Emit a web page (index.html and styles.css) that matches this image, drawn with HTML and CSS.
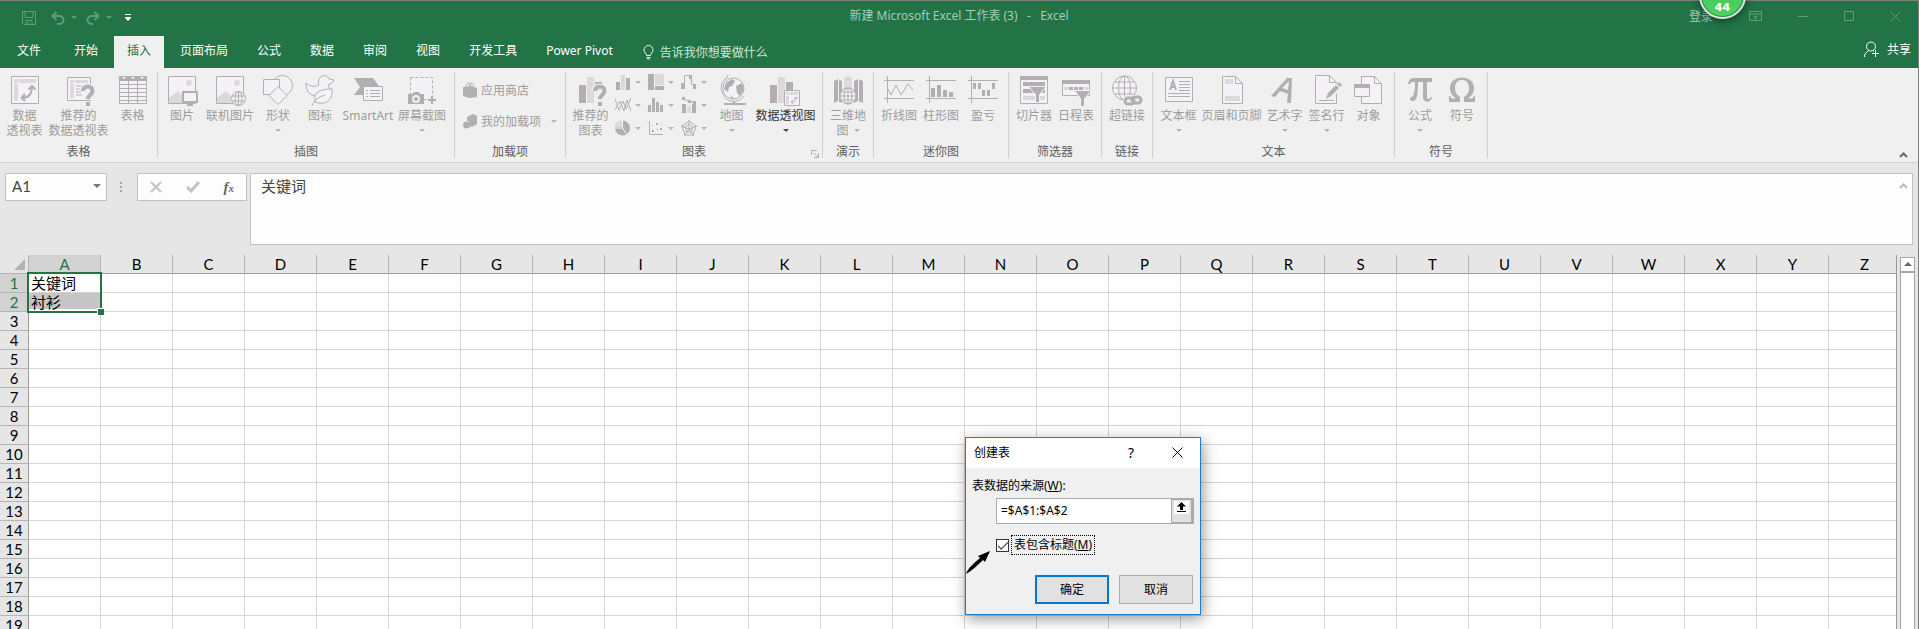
FILE: index.html
```html
<!DOCTYPE html>
<html lang="zh-CN">
<head>
<meta charset="utf-8">
<title>新建 Microsoft Excel 工作表 (3) - Excel</title>
<link rel="stylesheet" href="styles.css">
</head>
<body>
<div class="window">
  <header class="titlebar">
    <div class="quick">
      <button class="qbtn" aria-label="保存"><svg width="14" height="14"><path class="q" d="M.5.5h13v13H2L.5 12zM3 .5v6h8v-6M4 13.500v-4h6v4M6 11v2.500"/></svg></button>
      <button class="qbtn undo" aria-label="撤消"><svg width="14" height="14"><path class="q thick" d="M1 5h7.500a4 4 0 0 1 0 8H6M5.500 1L1.500 5l4 4"/></svg></button>
      <button class="qbtn" aria-label="撤消选项"><svg width="6" height="4"><path class="qf" d="M0 0h6L3 3z"/></svg></button>
      <button class="qbtn redo" aria-label="恢复"><svg width="14" height="14"><path class="q thick" d="M13 5H5.500a4 4 0 0 0 0 8H7M8.500 1l4 4-4 4"/></svg></button>
      <button class="qbtn" aria-label="恢复选项"><svg width="6" height="4"><path class="qf" d="M0 0h6L3 3z"/></svg></button>
      <button class="qbtn custom" aria-label="自定义快速访问工具栏"><svg width="6" height="8"><path fill="#fff" d="M0 0h6v1H0zM0 3h6v1L3 7 0 4z"/></svg></button>
    </div>
    <h1 class="doc">新建 Microsoft Excel 工作表 (3) &nbsp;&nbsp;- &nbsp;&nbsp;Excel</h1>
    <div class="winctl">
      <a class="login" href="#">登录</a>
      <button class="wbtn" aria-label="功能区显示选项"><svg width="14" height="11"><path class="q" d="M.5.5h12v9H.5zM.500 3h12M6.500 9V4.500M4.500 6.500l2-2 2 2"/></svg></button>
      <button class="wbtn" aria-label="最小化"><svg width="11" height="11"><path class="q" d="M0 5.500h10"/></svg></button>
      <button class="wbtn" aria-label="最大化"><svg width="11" height="11"><path class="q" d="M.5.500h9v9h-9z"/></svg></button>
      <button class="wbtn" aria-label="关闭"><svg width="11" height="11"><path class="q" d="M.5.500l10 10M10.500.500l-10 10"/></svg></button>
    </div>
    <span class="badge">44</span>
  </header>

  <nav class="tabs">
    <button class="tab file">文件</button>
    <button class="tab">开始</button>
    <button class="tab active">插入</button>
    <button class="tab">页面布局</button>
    <button class="tab">公式</button>
    <button class="tab">数据</button>
    <button class="tab">审阅</button>
    <button class="tab">视图</button>
    <button class="tab">开发工具</button>
    <button class="tab">Power Pivot</button>
    <button class="tell"><svg width="11" height="15"><path d="M3.500 10.500c0-2-2.500-3-2.500-5.500a4.500 4.500 0 0 1 9 0c0 2.500-2.500 3.500-2.500 5.500zM3.500 12.500h4M4 14h3" fill="none" stroke="#e8f2ec"/></svg>告诉我你想要做什么</button>
    <button class="share"><svg width="17" height="17"><g fill="none" stroke="#fff"><circle cx="7" cy="5.500" r="4.500"/><path d="M.5 16c0-3 1.500-5 4-6M9 9.500l1 .5M11.500 9v7M8 12.500h7"/></g></svg>共享</button>
  </nav>

  <section class="ribbon">
    <div class="group g-table"><div class="items">
      <button class="item w48"><svg class="ic"><path class="p" d="M2.500 2.500h27v27h-27z"/><path class="l" d="M5 5h4v4H5zM10 5h17v4H10zM5 10h4v17H5z"/><path class="s t2" d="M13 24c7 0 10-4 10-12M19.500 15.500L23 12l3.500 3.500M16 20l-3.500 4L16 27"/></svg><span>数据<br>透视表</span></button>
      <button class="item w60"><svg class="ic"><path class="p" d="M4.500 3.500h23v23h-23z"/><path class="l" d="M7 6h4v3H7zM12 6h13v3H12zM7 10h4v14H7z"/><path class="s" d="M13 12h8M13 15h5M13 18h5M13 21h6"/><path d="M19 17c0-6 11-6 11 0 0 4-5.500 4-5.500 9" fill="none" stroke="#f0f0f0" stroke-width="6"/><path class="s t4" d="M20 17c0-6 9.500-6 9.500 0 0 4-4.500 3.500-4.500 8"/><path class="f" d="M23 28h4v4h-4z"/></svg><span>推荐的<br>数据透视表</span></button>
      <button class="item w48"><svg class="ic"><path class="p" d="M2.500 2.500h27v27h-27z"/><path class="f" d="M2 2h28v5H2z"/><path class="s" d="M2 10.500h28M2 14.500h28M2 18.500h28M2 22.500h28M2 26.500h28M11.500 7v23M20.500 7v23"/><path fill="#fff" d="M5 3h4L7 5zM14 3h4l-2 2zM23 3h4l-2 2z"/></svg><span>表格</span></button>
    </div><h2>表格</h2></div>

    <div class="group g-illus"><div class="items start">
      <button class="item w48"><svg class="ic"><path class="p" d="M2.500 2.500h27v27h-27z"/><circle class="l" cx="23" cy="9" r="3"/><path class="l" d="M3 24l9-7 5 5v7H3z"/><path class="p t2" d="M17 18h14v10H17z"/><path class="s t2" d="M21 31h6M24 28v3"/></svg><span>图片</span></button>
      <button class="item w48"><svg class="ic"><path class="p" d="M2.500 2.500h27v27h-27z"/><circle class="l" cx="23" cy="9" r="3"/><path class="l" d="M3 24l9-7 5 5v7H3z"/><circle class="p" cx="24.500" cy="24.500" r="7"/><path class="s" d="M24.500 17v15M18 22h13M18 27h13"/><ellipse class="s" cx="24.500" cy="24.500" rx="3.500" ry="7"/></svg><span>联机图片</span></button>
      <button class="item w48"><svg class="ic"><circle class="p" cx="20.500" cy="11.500" r="10"/><path class="p" d="M1.500 5.500h16v15h-16z"/><path class="p" d="M16 12.500l9 9-9 9-9-9z"/></svg><span>形状</span><i class="arr"></i></button>
      <button class="item w36"><svg class="ic"><path class="p" d="M15 11C12 3 22-2 25 5l5 1c-1 3-3 4-5 4-1 3 1 5 1 8L13 22C6 22 2 18 2 9c4 4 9 4 13 2z"/><path class="p" d="M11 28c-2-11 7-13 17-13 1 10-5 17-17 13zM8 32c2-6 7-9 13-11"/></svg><span>图标</span></button>
      <button class="item w60"><svg class="ic"><path class="f" d="M2 4h19l6 8H12v9H2l6-8z"/><path class="p" d="M11.500 12.500h19v14h-19z"/><path class="s" d="M14 16.500h2M18 16.500h10M14 19.500h2M18 19.500h10M14 22.500h2M18 22.500h10"/></svg><span>SmartArt</span></button>
      <button class="item w48"><svg class="ic"><path class="p" stroke-dasharray="3 2" d="M4.500 3.500h22v22h-22z"/><path class="f" d="M2 20h4l2-2h5l1 2h4v10H2z"/><circle cx="10" cy="25" r="3" fill="none" stroke="#f5f2f7" stroke-width="2"/><path class="s t2" d="M22 26h8M26 22v8"/></svg><span>屏幕截图</span><i class="arr"></i></button>
    </div><h2>插图</h2></div>

    <div class="group g-addin"><div class="rows">
      <button class="row"><svg width="15" height="16"><path class="f" d="M0 5l9-1 5 2v9l-8 1-6-2z"/><path class="s" d="M3 5c0-5 4-5 5-1M6 4c1-4 4-4 5 0"/></svg>应用商店</button>
      <button class="row"><svg width="15" height="16"><path class="f" d="M4 4l6-3 4 2v8l-5 3-3-1V8H4z"/><circle class="f" cx="3.500" cy="12" r="3.500"/></svg>我的加载项<i class="arr"></i></button>
    </div><h2>加载项</h2></div>

    <div class="group g-chart"><div class="items">
      <button class="item w48"><svg class="ic"><path class="f" d="M4 11h7v18H4zM20 8h7v8h-7z"/><path class="l" d="M12 3h7v26h-7z"/><path d="M19 17c0-6 11-6 11 0 0 4-5.500 4-5.500 9" fill="none" stroke="#f0f0f0" stroke-width="6"/><path class="s t4" d="M20 17c0-6 9.500-6 9.500 0 0 4-4.500 3.500-4.500 8"/><path class="f" d="M23 28h4v4h-4z"/></svg><span>推荐的<br>图表</span></button>
      <div class="charts">
        <button class="ch" aria-label="柱形图"><svg><path class="f" d="M1 8h4v8H1zM11 4h4v12h-4z"/><path class="l" d="M6 1h4v15H6z"/></svg><i class="arr"></i></button>
        <button class="ch" aria-label="层次结构图"><svg><path class="f" d="M0 0h6v16H0zM7 12h9v4H7z"/><path class="l" d="M7 0h9v11H7z"/></svg><i class="arr"></i></button>
        <button class="ch" aria-label="瀑布图"><svg><path class="f" d="M0 9h4v6H0zM12 10h3v5h-3zM8 1h3v4H8z"/><path class="s" d="M3.500 9V1.500H9M10.500 5v5.500H13"/></svg><i class="arr"></i></button>
        <button class="ch" aria-label="折线图"><svg><path class="s" d="M0 2l4 11 4-9 3 8 5-11M0 13l5-9 4 10 3-11 4 11"/></svg><i class="arr"></i></button>
        <button class="ch" aria-label="统计图"><svg><path class="f" d="M0 8h3v7H0zM4 1h3v14H4zM8 5h3v10H8zM12 8h3v7h-3z"/></svg><i class="arr"></i></button>
        <button class="ch" aria-label="组合图"><svg><path class="f" d="M1 7h4v9H1zM11 7h4v9h-4z"/><path class="l" d="M6 9h4v7H6z"/><path class="s" d="M1 1.500l7 3 6 1"/><path class="f" d="M1 0h3v3H1zM7 3h3v3H7zM12 4h3v3h-3z"/></svg><i class="arr"></i></button>
        <button class="ch" aria-label="饼图"><svg><circle class="f" cx="7.500" cy="8" r="7.500"/><path class="l" d="M7 7V0C3 0 0 3 0 7z"/><path stroke="#f0f0f0" fill="none" d="M7.500 0v8H0M7.500 8l4 6"/></svg><i class="arr"></i></button>
        <button class="ch" aria-label="散点图"><svg><path class="s" d="M1.500 1v13.500H15"/><path class="f" d="M4 10h2v2H4zM8 3h2v2H8zM12 8h2v2h-2zM9 9h1v1H9zM4 5h1v1H4zM13 3h1v1h-1z"/></svg><i class="arr"></i></button>
        <button class="ch" aria-label="雷达图"><svg><path class="s" d="M8 1l7 5-3 9H4L1 6zM8 4l4 3-2 5H6L4 7zM8 0v9M0 6l8 3 8-3M3 16l5-7 5 7"/></svg><i class="arr"></i></button>
      </div>
      <button class="item w36"><svg class="ic"><circle class="p" cx="17.500" cy="14.500" r="10.500"/><path class="f" d="M10 9l6-4 3 2-3 5-3 1-1 5-4-3zM20 12l6-3 2 6-4 7-3-3zM14 21l4 3-2 1z"/><path class="s" d="M11 1l1 2-4 3C3 12 5 21 12 26c6 3 12 1 16-4"/><path class="s t2" d="M18 27v3M8 30h22"/></svg><span>地图</span><i class="arr"></i></button>
      <button class="item w72 on"><svg class="ic"><path class="f" d="M0 11h7v18H0zM16 8h7v8h-7z"/><path class="l" d="M8 3h7v26H8z"/><path class="p" d="M14.500 16.500h15v15h-15z"/><path class="l" d="M16 18h3v3h-3zM20 18h8v3h-8zM16 22h3v8h-3z"/><path class="s" d="M21 28c4 0 5-1 5-5M24 25l2-2 2 2M23 26l-2 2 2 2"/></svg><span>数据透视图</span><i class="arr"></i></button>
    </div><h2>图表</h2><button class="launch" aria-label="图表选项"><svg width="8" height="8"><path class="s" d="M.5 5V.500H6M3 3l4 4M7.500 3v4.500H3"/></svg></button></div>

    <div class="group g-tour"><div class="items">
      <button class="item w48"><svg class="ic"><path class="f" d="M2 7l4-2 4 2v22l-4-2-4 2zM22 7l4-2 5 2v22l-5-2-4 2z"/><path class="l" d="M12 4l4-2 4 2v14h-8z"/><path d="M6.500 5v22M26.500 5v22" stroke="#f0f0f0"/><circle class="p" cx="16" cy="22" r="8"/><ellipse class="s" cx="16" cy="22" rx="4" ry="8"/><path class="s" d="M16 14v16M8 22h16M10 18h12M10 26h12"/></svg><span>三维地<br>图 <i class="arr inline"></i></span></button>
    </div><h2>演示</h2></div>

    <div class="group g-spark"><div class="items">
      <button class="item w42"><svg class="ic"><path class="s" d="M1 6.500h30M1 24.500h30M4.500 2v27M5 15l3 6 5-10 5 10 7-11 5 6"/></svg><span>折线图</span></button>
      <button class="item w42"><svg class="ic"><path class="s" d="M1 6.500h30M1 24.500h30M4.500 2v27"/><path class="f" d="M6 14h4v9H6zM12 11h4v12h-4zM18 16h4v7h-4zM24 18h4v5h-4z"/></svg><span>柱形图</span></button>
      <button class="item w42"><svg class="ic"><path class="s" d="M1 6.500h30M1 24.500h30M4.500 2v27"/><path class="f" d="M6 9h3v6H6zM11 9h3v6h-3zM15 16h3v6h-3zM20 16h3v6h-3zM25 9h3v6h-3z"/></svg><span>盈亏</span></button>
    </div><h2>迷你图</h2></div>

    <div class="group g-filter"><div class="items">
      <button class="item w42"><svg class="ic"><path class="p" d="M2.500 2.500h27v27h-27z"/><path class="f" d="M2 2h28v4H2zM5 8h22v4H5zM5 15h22v4H5z"/><path class="l" d="M5 22h22v4H5z"/><path fill="#b1afb1" stroke="#f5f2f7" d="M10.500 12.500h18l-7 8v8h-4v-8z"/></svg><span>切片器</span></button>
      <button class="item w42"><svg class="ic"><path class="p" d="M2.500 7.500h27v14h-27z"/><path class="f" d="M2 6h28v4H2zM9 13h4v3H9zM14 13h4v3h-4zM19 13h4v3h-4z"/><path class="l" d="M4 13h4v3H4zM24 13h4v3h-4z"/><path fill="#b1afb1" stroke="#f5f2f7" d="M14.500 16.500h17l-7 8v8h-4v-8z"/></svg><span>日程表</span></button>
    </div><h2>筛选器</h2></div>

    <div class="group g-link"><div class="items">
      <button class="item w48"><svg class="ic"><circle class="p" cx="13.500" cy="14" r="12"/><ellipse class="s" cx="13.500" cy="14" rx="6" ry="12"/><path class="s" d="M13.500 2v24M1.500 14h24M4 8h19M4 20h19"/><rect x="12" y="21" width="20" height="11" rx="5" fill="#f0f0f0"/><g class="s t3"><rect x="14" y="24" width="9" height="6" rx="3"/><rect x="21" y="23" width="9" height="6" rx="3"/></g></svg><span>超链接</span></button>
    </div><h2>链接</h2></div>

    <div class="group g-text"><div class="items">
      <button class="item w42"><svg class="ic"><path class="p" d="M2.500 3.500h27v24h-27z"/><path class="s t2" d="M7 16l3-9 3 9M8 13h4"/><path class="s" d="M16 7.500h11M16 10.500h11M16 13.500h11M16 16.500h11M5 19.500h22M5 22.500h22"/></svg><span>文本框</span><i class="arr"></i></button>
      <button class="item w64"><svg class="ic"><path class="p" d="M6.500 2.500h13l7 7v20h-20z"/><path class="s" d="M19.500 2.500v7h7"/><path class="l" d="M9 5h8v5H9zM9 22h15v5H9z"/></svg><span>页眉和页脚</span></button>
      <button class="item w42"><svg class="ic"><path class="f" fill-rule="evenodd" d="M2 22L18 4h5l-1 25h-4l1-9-8-3-5 6zM13 14l6 2 1-9z"/></svg><span>艺术字</span><i class="arr"></i></button>
      <button class="item w42"><svg class="ic"><path class="p" d="M4.500 1.500h14l7 7v21h-21z"/><path class="s" d="M18.500 1.500v7h7M8 26.500h15"/><path d="M16 24l13-13" stroke="#f0f0f0" stroke-width="7"/><path class="f" d="M15 25l2-6 8-8 3 3-8 8zM26 10l2-2 3 3-2 2z"/></svg><span>签名行</span><i class="arr"></i></button>
      <button class="item w42"><svg class="ic"><path class="p" d="M8.500 2.500h13l7 7v20h-20z"/><path class="s" d="M21.500 2.500v7h7"/><path class="p" d="M1.500 10.500h15v12h-15z"/><path class="f" d="M1 10h16v4H1z"/></svg><span>对象</span></button>
    </div><h2>文本</h2></div>

    <div class="group g-sym"><div class="items">
      <button class="item w42"><svg class="ic"><path class="f" d="M4 10C5 5 7 4 10 4h18v4h-5v14c0 4 2 4 4 1l1 1c-2 5-9 5-9-1V8h-5c0 12-1 19-5 19-5 0-3-4 0-5 2-3 2-9 2-14-3 0-4 0-5 2z"/></svg><span>公式</span><i class="arr"></i></button>
      <button class="item w42"><svg class="ic"><path class="f" d="M3 28v-6h1c1 3 3 3 6 2-4-2-6-6-6-10C4 0 28 0 28 14c0 4-2 8-6 10 3 1 5 1 6-2h1v6H18v-5c4-3 5-5 5-9 0-11-14-11-14 0 0 4 1 6 5 9v5z"/></svg><span>符号</span></button>
    </div><h2>符号</h2></div>
    <button class="collapse" aria-label="折叠功能区"><svg width="9" height="6"><path d="M1 5l3.500-3.500L8 5" fill="none" stroke="#666" stroke-width="2"/></svg></button>
  </section>

  <section class="fbar">
    <div class="namebox"><input aria-label="名称框" value="A1"><button aria-label="名称列表"><svg width="8" height="5"><path fill="#777" d="M0 0h8L4 4z"/></svg></button></div>
    <svg class="dots" width="3" height="11"><path fill="#a8a8a8" d="M0 0h2v2H0zM0 4h2v2H0zM0 8h2v2H0z"/></svg>
    <div class="fx">
      <button aria-label="取消"><svg width="12" height="12"><path d="M1 1l10 10M11 1L1 11" stroke="#c3c3c3" stroke-width="2"/></svg></button>
      <button aria-label="输入"><svg width="14" height="12"><path d="M1 6l4 4 8-9" fill="none" stroke="#c3c3c3" stroke-width="3"/></svg></button>
      <button class="fn" aria-label="插入函数">f<small>x</small></button>
    </div>
    <div class="formula"><textarea aria-label="编辑栏">关键词</textarea><svg width="9" height="6"><path d="M1 5l3.500-3.500L8 5" fill="none" stroke="#bbb" stroke-width="2"/></svg></div>
  </section>

  <main class="sheet">
    <div class="gridwrap"><table class="grid"><thead><tr id="cols"><th class="corner"><svg width="11" height="11"><path fill="#b3b3b3" d="M11 0v11H0z"/></svg></th></tr></thead><tbody id="rows"></tbody></table></div>
    <div class="scroll"><button aria-label="向上滚动"><svg width="8" height="5"><path fill="#666" d="M0 4h8L4 0z"/></svg></button><div class="thumb"></div></div>
  </main>
</div>

<form class="dialog" role="dialog" aria-labelledby="dlgTitle">
  <div class="dtitle"><strong id="dlgTitle">创建表</strong>
    <button type="button" class="help" aria-label="帮助">?</button>
    <button type="button" class="close" aria-label="关闭"><svg width="11" height="11"><path d="M.5.500l10 10M10.500.500l-10 10" stroke="#000"/></svg></button></div>
  <label class="src" for="range">表数据的来源(<u>W</u>):</label>
  <div class="range"><input id="range" value="=$A$1:$A$2"><button type="button" aria-label="选择区域"><svg width="15" height="13"><path fill="#fff" d="M0 0h15v13H0z"/><path d="M7.500 1L12 5.500H9V9H6V5.500H3zM3 10h9v1H3z"/></svg></button></div>
  <div class="check"><input type="checkbox" id="hdr" checked><label for="hdr">表包含标题(<u>M</u>)</label></div>
  <div class="actions"><button type="submit" class="ok">确定</button><button type="button">取消</button></div>
  <svg class="pointer" width="24" height="23"><path d="M24 0l-5 11-2-2C11 15 5 20 0 23c2-6 8-11 14-16l-2-2z"/></svg>
</form>
<script src="grid.js"></script>
</body>
</html>
```
FILE: styles.css
```css
* { box-sizing: border-box; }
body { margin: 0; font: 12px/15px "Noto Sans", "Noto Sans CJK SC", sans-serif; color: #000; overflow: hidden; }
button, input, textarea { font: inherit; color: inherit; border: 0; background: none; padding: 0; margin: 0; outline: 0; border-radius: 0; }
svg { display: block; flex: none; }
h1, h2 { margin: 0; font-size: 12px; font-weight: 400; }
.window { height: 100vh; display: flex; flex-direction: column; background: #e6e6e6; border-top: 1px solid #7f7f7f; border-right: 1px solid #7f7f7f; }

.titlebar { flex: none; height: 35px; background: #227447; display: grid; grid-template-columns: 1fr auto 1fr; position: relative; }
.q { fill: none; stroke: #5f9c7a; }
.q.thick { stroke-width: 2; }
.qf { fill: #5f9c7a; }
.quick { display: flex; align-items: center; padding: 0 0 2px 22px; }
.undo { margin: 0 6px 0 15px; }
.redo { margin: 0 6px 0 9px; }
.custom { margin-left: 13px; }
.doc { color: #a6cbb5; line-height: 29px; white-space: pre; }
.winctl { display: flex; align-items: center; justify-content: flex-end; padding: 0 17px 5px 0; }
.login { color: #a6cbb5; text-decoration: none; margin-right: 36px; }
.wbtn + .wbtn { margin-left: 35px; }
.badge { position: absolute; right: 172px; top: -29px; width: 47px; height: 47px; border-radius: 50%; border: 2px solid #e2e6e3; background: linear-gradient(#3fc04f, #50d366); box-shadow: inset 0 0 0 1px #1f8a45, 0 2px 8px rgba(0,0,0,.5); color: #fff; font: bold 11px/12px "DejaVu Sans", sans-serif; text-align: center; padding-top: 28px; }

.tabs { flex: none; height: 32px; background: #227447; color: #fff; display: flex; gap: 3px; padding: 0 7px 0 4px; }
.tab { padding: 0 13px 3px; white-space: nowrap; }
.file { margin-right: 4px; }
.tab.active { background: #f0f0f0; color: #227447; }
.tell, .share { display: flex; align-items: center; gap: 6px; }
.tell { margin-left: 14px; color: #d3e5da; }
.share { margin-left: auto; padding-bottom: 5px; }

.ribbon { flex: none; height: 95px; background: #f0f0f0; border-bottom: 1px solid #d2d2d2; display: flex; padding: 4px 0; }
.group { border-right: 1px solid #d0d0d0; display: flex; flex-direction: column; justify-content: space-between; position: relative; color: #9d9d9d; white-space: nowrap; }
.group h2 { text-align: center; color: #606060; line-height: 12px; }
.items { display: flex; justify-content: center; }
.items.start { justify-content: flex-start; }
.item { display: flex; flex-direction: column; align-items: center; justify-content: flex-start; padding-top: 2px; }
.item span { margin-top: 2px; }
.ic { width: 32px; height: 32px; overflow: visible; }
.w36 { width: 36px; } .w42 { width: 42px; } .w48 { width: 48px; } .w60 { width: 60px; } .w64 { width: 64px; } .w72 { width: 72px; }
.on { color: #333; }
.s { fill: none; stroke: #b1afb1; }
.p { fill: #f5f2f7; stroke: #b1afb1; }
.f { fill: #b1afb1; }
.l { fill: #dcd8dc; }
.t2 { stroke-width: 2; } .t3 { stroke-width: 3; } .t4 { stroke-width: 4; }
.arr { display: block; border: 3px solid transparent; border-top-color: #b5b5b5; border-bottom: 0; width: 6px; height: 3px; }
.item .arr { margin-top: 6px; }
.item .arr.inline { display: inline-block; margin: 0 0 3px 2px; }
.on .arr { border-top-color: #444; }
.g-table { width: 158px; } .g-illus { width: 297px; } .g-addin { width: 111px; } .g-chart { width: 257px; } .g-tour { width: 51px; }
.g-spark { width: 135px; } .g-filter { width: 93px; } .g-link { width: 51px; } .g-text { width: 242px; } .g-sym { width: 93px; }
.rows { padding: 10px 0 0 8px; display: flex; flex-direction: column; gap: 15px; }
.row { display: flex; align-items: center; gap: 3px; height: 16px; }
.row .arr { margin-left: 7px; }
.charts { display: grid; grid-template-columns: repeat(3, 33px); grid-auto-rows: 23px; padding-top: 2px; }
.ch { display: flex; align-items: flex-start; gap: 4px; }
.ch svg { width: 16px; height: 16px; }
.ch .arr { margin-top: 7px; }
.launch { position: absolute; right: 3px; bottom: 0; }
.collapse { margin-left: auto; align-self: flex-end; padding: 0 10px 0 0; }

.fbar { flex: none; display: flex; align-items: flex-start; padding: 10px 5px 10px; }
.namebox, .fx, .formula { background: #fdfdfd; border: 1px solid #c3c3c3; display: flex; }
.namebox { width: 102px; height: 28px; padding: 0 5px 2px 6px; align-items: center; }
.namebox input { flex: 1; min-width: 0; font: 15px/20px Lato, sans-serif; color: #444; }
.dots { margin: 9px 14px 0 13px; }
.fx { width: 110px; height: 28px; align-items: center; justify-content: space-between; padding: 0 12px; }
.fn { font: italic bold 15px/20px "Liberation Serif", serif; color: #666; }
.fn small { font-size: 11px; }
.formula { flex: 1; margin-left: 3px; height: 72px; padding: 2px 4px 0 10px; }
.formula textarea { flex: 1; resize: none; font: 15px/20px "Noto Sans CJK SC", sans-serif; color: #444; overflow: hidden; }
.formula svg { margin-top: 7px; }

.sheet { flex: 1; min-height: 0; display: flex; padding-right: 3px; overflow: hidden; }
.gridwrap { flex: 1; min-width: 0; overflow: hidden; position: relative; border-right: 1px solid #9b9b9b; }
.grid { border-collapse: separate; border-spacing: 0; table-layout: fixed; width: 0; font: 15px/18px "Noto Sans CJK SC", sans-serif; }
.grid th, .grid td { padding: 0; height: 19px; width: 72px; white-space: nowrap; }
.grid th { font: 400 15px/18px Lato, sans-serif; background: #e6e6e6; border-right: 1px solid #b5b5b5; border-bottom: 1px solid #9b9b9b; }
.grid td { background: #fff; border-right: 1px solid #d4d4d4; border-bottom: 1px solid #d4d4d4; }
.grid tbody th { border-right-color: #9b9b9b; border-bottom-color: #b5b5b5; padding-top: 1px; line-height: 17px; }
.grid .corner { width: 29px; padding-left: 14px; border-bottom-color: #b5b5b5; }
.grid .sel { background: #d2d2d2; color: #227447; }
.grid td.a { position: relative; padding-left: 2px; }
.grid td.fill { background: #c6c6c6; box-shadow: inset 0 -2px 0 #fff; }
.ring { position: absolute; z-index: 1; left: -2px; top: -2px; width: 75px; height: 41px; border: 2px solid #227447; }
.ring::after { content: ""; position: absolute; right: -4px; bottom: -4px; width: 6px; height: 6px; background: #227447; border: solid #fff; border-width: 1px 0 0 1px; }
.scroll { width: 15px; margin-left: 3px; padding-top: 2px; display: flex; flex-direction: column; }
.scroll button { height: 15px; flex: none; background: #fff; border: 1px solid #a5a5a5; display: grid; place-items: center; }
.thumb { flex: 1; background: #fff; border: 1px solid #a5a5a5; border-bottom: 0; }

.dialog { position: absolute; left: 965px; top: 437px; width: 236px; background: #f0f0f0; border: 1px solid #1b7fd0; box-shadow: 2px 4px 14px rgba(0,0,0,.4); padding-bottom: 10px; }
.dtitle { background: #fff; height: 30px; display: flex; align-items: center; padding: 0 17px 2px 8px; }
.dtitle strong { font-weight: 400; flex: 1; }
.help { margin-right: 38px; font-size: 14px; }
.src { display: block; padding: 10px 6px 5px; line-height: 15px; }
.range { margin: 0 6px 0 30px; height: 26px; display: flex; background: #fff; border: 1px solid #ababab; }
.range input { flex: 1; min-width: 0; padding: 0 0 2px 4px; }
.range button { width: 22px; background: #e1e1e1; border: 1px solid #ababab; border-width: 1px 2px 1px 1px; padding: 1px 2px; display: flex; }
.check { display: flex; align-items: center; gap: 2px; margin: 11px 0 0 30px; height: 20px; }
.check input { appearance: none; width: 13px; height: 13px; border: 1px solid #333; background: #fff; display: grid; place-items: center; }
.check input:checked::after { content: ""; width: 9px; height: 4px; border: solid #333; border-width: 0 0 1px 1px; transform: translateY(-1px) rotate(-45deg); }
.check label { border: 1px dotted #000; padding: 1px 2px; line-height: 16px; }
.actions { display: flex; justify-content: flex-end; gap: 10px; padding: 20px 7px 0 0; }
.actions button { width: 74px; height: 29px; background: #e1e1e1; border: 1px solid #adadad; }
.actions .ok { border: 2px solid #0078d7; }
.pointer { position: absolute; left: 0; top: 113px; }
```
FILE: grid.js
```js
const cols = document.getElementById('cols');
const rows = document.getElementById('rows');
const values = { 1: '关键词', 2: '衬衫' };

for (let c = 0; c < 26; c++) {
  const th = document.createElement('th');
  th.textContent = String.fromCharCode(65 + c);
  if (c === 0) th.className = 'sel';
  cols.append(th);
}

for (let r = 1; r <= 19; r++) {
  const tr = rows.insertRow();
  const th = document.createElement('th');
  th.textContent = r;
  if (values[r]) th.className = 'sel';
  tr.append(th);
  for (let c = 0; c < 26; c++) {
    const td = tr.insertCell();
    if (c === 0 && values[r]) {
      td.textContent = values[r];
      td.className = r === 2 ? 'a fill' : 'a';
      if (r === 1) {
        const ring = document.createElement('div');
        ring.className = 'ring';
        td.append(ring);
      }
    }
  }
}
```
